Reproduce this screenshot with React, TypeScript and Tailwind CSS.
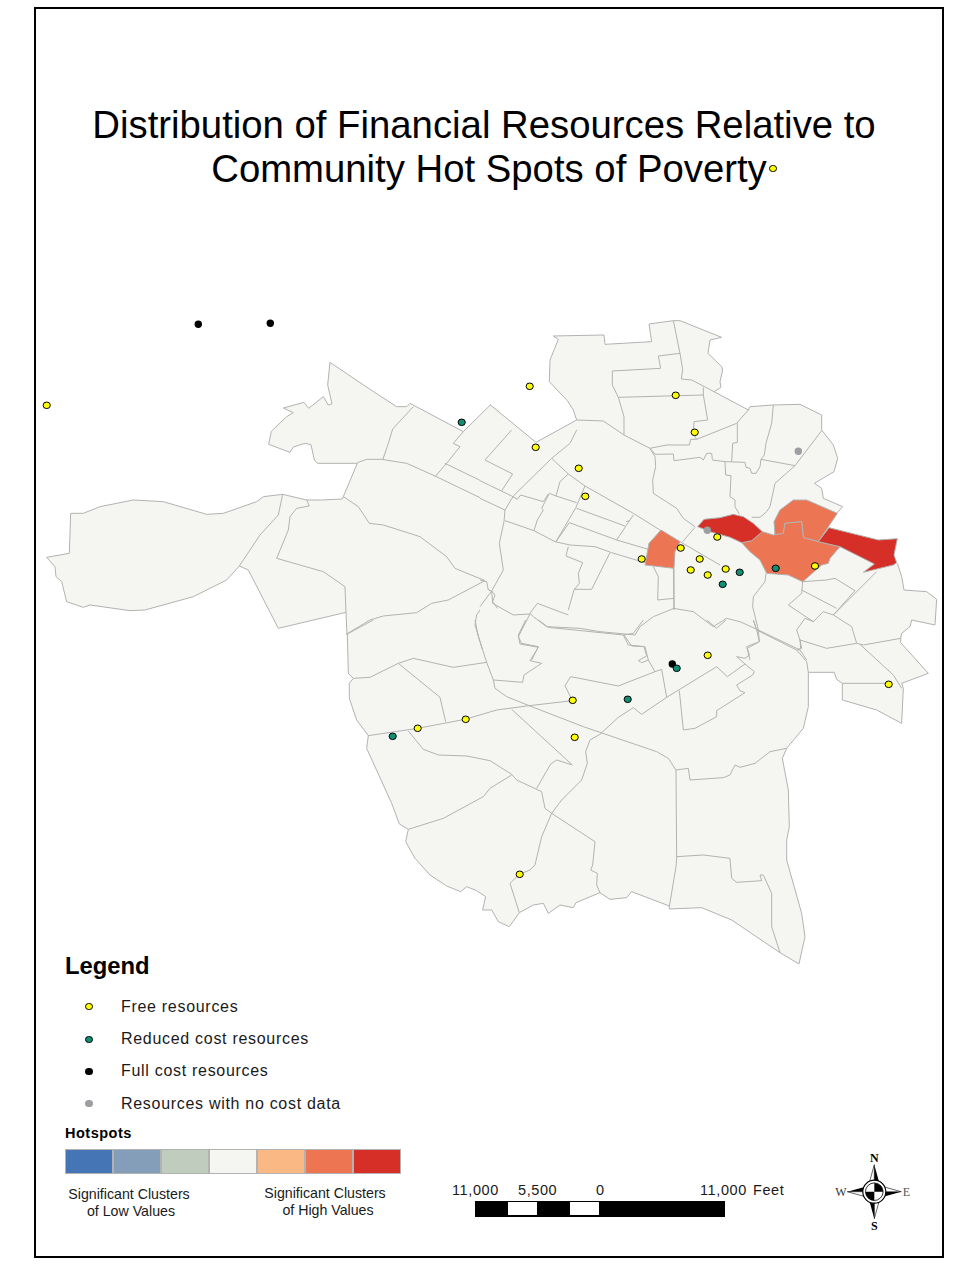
const FONT = { fontFamily: '"Liberation Sans", Arial, sans-serif' };

const FILL = '#f5f6f1';
const LINE = '#b2b2b2';
const ORANGE = '#ec7553';
const RED = '#d52f28';

const fillsA = [
  '1382,314 1300,395 1140,310 1130,320 1100,320 1020,268 900,187 893,255 906,312 895,315 880,290 836,325 822,307 760,324 790,338 770,350 724,394 716,433 780,457 790,441 825,430 843,434 853,480 862,490 982,490 937,597 875,600 830,600 758,583 700,590 680,605 580,640 530,643 400,605 310,600 210,620 160,640 122,640 118,760 50,772 75,800 78,830 95,845 110,905 160,922 180,915 300,932 345,930 490,890 590,840 628,798 655,810 745,985 948,937 951,1050 1410,1050 1410,330',
];
const linesA = [
  '1382,314 1300,395 1140,310 1130,320 1100,320 1020,268 900,187 893,255 906,312 895,315 880,290 836,325 822,307 760,324 790,338 770,350 724,394 716,433 780,457 790,441 825,430 843,434 853,480 862,490 982,490 937,597 875,600 830,600 758,583 700,590 680,605 580,640 530,643 400,605 310,600 210,620 160,640 122,640 118,760 50,772 75,800 78,830 95,845 110,905 160,922 180,915 300,932 345,930 490,890 590,840 628,798 655,810 745,985 948,937 951,1005',
  '758,583 745,645 690,705 628,798',
  '830,600 838,618 800,625 780,650 775,690 740,775 880,815 945,860 948,937',
  '1150,320 1088,387 1075,430 1058,480',
  '982,488 1010,478 1055,478 1130,490 1215,528 1350,593',
  '1300,395 1270,430 1290,440 1250,490 1215,530',
  '1245,490 1350,541',
  '940,590 985,620 1018,670 1060,675 1170,710 1250,770 1275,805 1365,842',
  '950,1002 1020,960 1060,948 1160,938 1205,910 1255,900 1365,842',
  '1350,930 1340,945 1335,975 1358,1050',
];

const fillsB = [
  '0,320 30,284 168,397 290,330 280,300 262,272 208,215 210,150 235,88 220,78 372,75 375,103 515,95 507,42 580,32 600,32 725,82 690,90 684,130 725,170 728,180 720,215 723,232 702,245 805,300 810,290 880,285 960,283 1025,315 1025,360 1060,405 1073,445 1062,485 1003,520 1025,535 1030,565 1088,590 1072,608 1040,650 1195,690 1252,686 1240,730 1252,760 1265,800 1272,840 1340,845 1370,868 1365,945 1295,930 1290,950 1265,970 1262,985 1262,1050 0,1050',
];
const linesB = [
  '30,284 168,397 290,330 280,300 262,272 208,215 210,150 235,88 220,78 372,75 375,103 515,95 507,42 580,32 600,32 725,82 690,90 684,130 725,170 728,180 720,215 723,232 702,245 805,300 810,290 880,285 960,283 1025,315 1025,360 1060,405 1073,445 1062,485 1003,520 1025,535 1030,565 1088,590 1072,608',
  '1252,760 1265,800 1272,840 1340,845 1370,868 1365,945 1295,930 1290,950 1265,970 1262,985',
  '580,32 600,130 608,178 604,207 635,210 702,245',
  '535,138 600,130',
  '535,138 542,175 397,183 397,225 415,262 432,320 432,375',
  '415,262 670,255 683,330 642,335 640,372 650,388 770,340 805,300',
  '670,232 670,255',
  '290,330 370,333 432,375 510,415 525,432',
  '510,415 560,405 628,405 632,388 650,388',
  '772,340 772,397 758,400 755,455',
  '880,285 875,340 858,400 853,435 843,448',
  '697,450 735,455 795,457 798,472 810,475 815,490 828,490 840,470 843,448 945,467 1025,362',
  '735,455 737,495 753,497 750,560 765,570 765,590 778,612',
  '945,467 885,520 870,590 860,605 840,622 815,622',
  '858,790 855,815 820,860 818,890 835,960 838,995 800,1010 810,1050',
  '968,815 965,850 925,885 1000,935 1030,905 1060,915 1190,785',
  '968,815 1040,810 1065,805 1125,842 1060,915',
  '965,840 1070,895',
  '1060,915 1115,950 1130,1000 1150,1005 1262,985',
  '1000,935 975,925 950,960 960,990 1040,1015 1130,1000',
  '835,960 960,1020 980,1050',
  '960,990 965,1015 955,1020',
  '580,760 582,895 520,920 480,950 465,975 360,965 300,955 200,950 160,920 150,910 172,880 265,915',
  '580,895 640,905 700,950 740,925 780,935 835,960',
  '150,912 115,980 125,1000 175,1010 155,1050',
  '35,843 38,880 100,915 150,912',
  '430,975 445,1005 495,1010 505,1050',
];

const linesCenter = [
  '95,0 15,90 98,132 65,182',
  '0,152 95,198 112,208 122,195 190,215',
  '0,205 75,240',
  '290,0 270,40 215,85 100,198 75,240 72,275 58,340 70,420 35,483 0,530',
  '215,85 265,132 315,168 460,250 540,300 600,335 720,405',
  '265,132 240,155 228,198 290,218',
  '315,168 288,232 228,335',
  '228,198 208,190 185,235 190,240 172,270 162,302',
  '190,215 205,192',
  '290,235 435,288',
  '268,278 410,330 505,358',
  '268,278 228,335',
  '460,255 438,288 410,330',
  '438,275 448,272',
  '75,272 162,302 225,335 270,345 345,350 395,368 495,398',
  '265,350 258,378 308,398 295,430 298,460 282,480 265,540',
  '282,478 335,478 390,368',
  '645,292 608,335',
  '520,410 535,440 533,510 582,505',
  '582,415 582,540',
  '0,450 20,455 25,480 35,483 45,495 38,515 52,535',
  '510,55 525,80 527,110 518,150 520,190 590,235 610,265 645,290',
  '525,73 580,72 582,92 660,82 670,90 680,70 695,70 697,88',
];

const fillsC = [
  '1265,40 1262,68 1345,160 1265,190 1270,205 1265,310 1190,270 1087,240 1087,190 1070,178 1063,157 985,157 985,260 970,325 920,385 907,415 925,510 928,620 920,660 920,720 965,880 975,950 957,1032 900,998 755,900 665,863 568,867 568,858 455,815 440,833 390,838 360,818 288,848 280,863 240,855 205,880 190,850 160,855 118,878 90,0',
];
const linesC = [
  '1262,68 1345,160 1265,190 1270,205 1265,310 1190,270 1087,240 1087,190 1070,178 1063,157 985,157 985,260 970,325 920,385 907,415 925,510 928,620 920,660 920,720 965,880 975,950 957,1032 900,998 755,900 665,863 568,867 568,858 455,815 440,833 390,838 360,818 288,848 280,863 240,855 205,880 190,850 160,855 118,878',
  '1087,190 1225,190',
  '1140,73 1240,165 1265,205',
  '1262,52 1262,68',
  '985,157 980,125 950,90 830,30 820,0',
  '960,58 962,85 950,90',
];

const fillsD = [
  '538,0 538,878 508,920 475,905 455,870 428,870 437,830 410,812 380,800 362,815 320,798 270,765 225,715 197,665 205,628 178,612 155,550 80,385 85,347 50,300 28,235 28,190 40,175 25,160 22,42 20,0',
];
const linesD = [
  '538,878 508,920 475,905 455,870 428,870 437,830 410,812 380,800 362,815 320,798 270,765 225,715 197,665 205,628 178,612 155,550 80,385 85,347 50,300 28,235 28,190 40,175 25,160 22,42',
  '22,42 100,0',
  '25,160 40,175 90,172 175,130 220,115 340,142 440,127',
  '405,0 415,50 440,127 460,180 465,205 500,230 570,258 730,320 950,395 985,415 1008,450',
  '460,180 548,187 552,165 605,130 570,122 595,82 540,72 535,45 557,0',
  '175,130 300,232 317,305',
  '85,347 233,325 375,298 470,270 560,258 697,242',
  '697,242 675,197 692,170 835,198 945,155 965,148 980,232',
  '852,45 875,78 912,80 920,108 895,122 905,128 925,120 945,155',
  '595,0 625,22 850,45 880,40 910,0',
  '1008,450 1010,715 1008,740 988,860',
  '1008,450 1045,445 1050,480 1150,473 1170,465 1185,435 1200,442 1245,430 1290,395 1340,385',
  '1010,710 1090,705 1170,715 1175,775 1190,787 1265,782 1260,765 1270,765 1295,820 1295,920 1320,998',
  '515,268 697,435',
  '697,435 650,420 632,432 590,505',
  '205,333 250,388 295,405 380,408 450,422 515,463 530,480 605,515 615,565 635,580 765,665 758,735 752,750 772,760 770,795 780,818',
  '515,465 450,505 430,530 310,595 205,628',
  '635,580 605,650 585,735 570,750 538,763 510,790 538,878',
  '980,232 1130,140 1162,170 1215,132 1190,110 1215,115 1228,105 1222,85 1258,65 1250,30 1240,0',
  '1215,132 1243,155 1238,165 1190,195 1200,212 1215,218 1130,272 1130,290 1065,325 1030,330 1018,212',
  '980,232 905,283 880,263 835,292 810,315 780,343 750,360 737,395 742,430 725,480 665,540 635,580',
  '1100,0 1130,25 1158,0',
];

const hotZoom6 = [
  { c: ORANGE, p: '435,135 432,95 450,60 490,30 530,30 622,70 565,155 520,143 515,95 465,100 460,130' },
  { c: ORANGE, p: '335,158 365,152 397,125 430,135 460,130 465,100 515,95 520,143 565,155 630,170 600,205 595,220 575,225 518,275 475,255 410,250 390,210 360,185' },
  { c: RED, p: '203,110 240,125 300,142 335,158 365,152 397,125 370,100 340,80 310,73 270,83 222,88' },
  { c: RED, p: '565,155 597,113 745,150 802,146 792,195 800,218 790,225 700,247 733,222 630,170' },
];

const dots: [number, number, string][] = [
  [46.7, 405.3, 'y'], [529.7, 386.3, 'y'], [675.7, 395.3, 'y'], [694.7, 432.3, 'y'], [535.7, 447.3, 'y'],
  [578.7, 468.3, 'y'], [585.3, 496.3, 'y'], [641.7, 559, 'y'], [680.7, 548, 'y'], [699.7, 559, 'y'],
  [717.3, 537, 'y'], [690.7, 570, 'y'], [707.7, 575, 'y'], [725.7, 569, 'y'], [815, 566, 'y'],
  [707.7, 655.3, 'y'], [572.7, 700.3, 'y'], [465.7, 719.3, 'y'], [417.7, 728.3, 'y'], [574.7, 737.3, 'y'],
  [519.7, 874.3, 'y'], [888.7, 684.3, 'y'],
  [461.7, 422.3, 't'], [739.7, 572.3, 't'], [722.7, 584.3, 't'], [775.7, 568.3, 't'], [392.7, 736.3, 't'],
  [627.7, 699.3, 't'],
  [198.3, 324.3, 'k'], [270.3, 323.3, 'k'], [672.3, 664, 'k'], [676.7, 668.3, 't'],
  [798.3, 451.3, 'g'], [707.3, 530.3, 'g'],
];

function Poly({ pts }: { pts: string[] }) {
  return (
    <>
      {pts.map((p, i) => (
        <polyline key={i} points={p} />
      ))}
    </>
  );
}

function Dot({ x, y, k }: { x: number; y: number; k: string }) {
  if (k === 'k') return <circle cx={x} cy={y} r={3.7} fill="#000" />;
  if (k === 'g') return <circle cx={x} cy={y} r={3.7} fill="#9c9ea2" />;
  return (
    <ellipse cx={x} cy={y} rx={3.6} ry={3.3} fill={k === 'y' ? '#ffff00' : '#0f9073'} stroke="#000" strokeWidth={1} />
  );
}

function MapArea() {
  return (
    <svg viewBox="36 191 906 759" className="block w-[906px] h-[759px] shrink-0 overflow-visible">
      <g fill={FILL} stroke="none">
        <g transform="translate(30 300) scale(0.33333)"><Poly pts={fillsA} /></g>
        <g transform="translate(480 310) scale(0.33333)"><Poly pts={fillsB} /></g>
        <g transform="translate(480 620) scale(0.33333)"><Poly pts={fillsC} /></g>
        <g transform="translate(340 620) scale(0.33333)"><Poly pts={fillsD} /></g>
      </g>
      <g fill="none" stroke={LINE} strokeWidth={3} strokeLinejoin="round">
        <g transform="translate(30 300) scale(0.33333)"><Poly pts={linesA} /></g>
        <g transform="translate(480 310) scale(0.33333)"><Poly pts={linesB} /></g>
        <g transform="translate(480 430) scale(0.33333)"><Poly pts={linesCenter} /></g>
        <g transform="translate(480 620) scale(0.33333)"><Poly pts={linesC} /></g>
        <g transform="translate(340 620) scale(0.33333)"><Poly pts={linesD} /></g>
      </g>
      <g stroke={LINE} strokeWidth={3} strokeLinejoin="round">
        <g transform="translate(480 430) scale(0.33333)">
          <polygon points="543,300 600,335 585,365 582,415 495,405 507,340" fill={ORANGE} />
        </g>
        <g transform="translate(630 490) scale(0.33333)">
          {hotZoom6.map((h, i) => (
            <polygon key={i} points={h.p} fill={h.c} />
          ))}
        </g>
      </g>
      {dots.map((d, i) => (
        <Dot key={i} x={d[0]} y={d[1]} k={d[2]} />
      ))}
    </svg>
  );
}

function Compass() {
  return (
    <svg viewBox="830 1148 90 84" className="block w-[90px] h-[84px]">
      <g transform="translate(874.3 1191.7)">
        <polygon points="0,-27 -5,-9 0,-9" fill="#fff" stroke="#000" strokeWidth={0.6} />
        <polygon points="0,-27 5,-9 0,-9" fill="#000" />
        <polygon points="0,27 5,9 0,9" fill="#fff" stroke="#000" strokeWidth={0.6} />
        <polygon points="0,27 -5,9 0,9" fill="#000" />
        <polygon points="-27,0 -9,-5 -9,0" fill="#000" />
        <polygon points="-27,0 -9,5 -9,0" fill="#fff" stroke="#000" strokeWidth={0.6} />
        <polygon points="27,0 9,5 9,0" fill="#000" />
        <polygon points="27,0 9,-5 9,0" fill="#fff" stroke="#000" strokeWidth={0.6} />
        <circle r={11.5} fill="#fff" stroke="#000" strokeWidth={1.2} />
        <circle r={8.8} fill="#fff" stroke="#000" strokeWidth={0.8} />
        <path d="M0 0 L0 -8.8 A8.8 8.8 0 0 1 8.8 0 Z" fill="#000" />
        <path d="M0 0 L0 8.8 A8.8 8.8 0 0 1 -8.8 0 Z" fill="#000" />
      </g>
      <g fontFamily='"Liberation Serif", serif' textAnchor="middle" fontSize={12}>
        <text x={874.3} y={1162} fontWeight="bold">N</text>
        <text x={874.3} y={1230} fontWeight="bold">S</text>
        <text x={841} y={1196} fill="#333">W</text>
        <text x={906.5} y={1196} fill="#555">E</text>
      </g>
    </svg>
  );
}

const legendItems = [
  { label: 'Free resources', dot: 'bg-[#ffff00] border border-black' },
  { label: 'Reduced cost resources', dot: 'bg-[#0f9073] border border-black' },
  { label: 'Full cost resources', dot: 'bg-black' },
  { label: 'Resources with no cost data', dot: 'bg-[#9c9ea2]' },
];

const swatches = ['bg-[#4575b5]', 'bg-[#849eba]', 'bg-[#c0ccbe]', 'bg-[#f5f6f1]', 'bg-[#fab984]', 'bg-[#ed7551]', 'bg-[#d62f27]'];

export default function App() {
  return (
    <div style={FONT} className="bg-white text-black w-[978px] h-[1265px] pt-[7px] pl-[34px]">
      <div className="relative w-[910px] h-[1251px] border-2 border-black flex flex-col">
        <h1 className="pt-[94px] text-center text-[38.3px] leading-[44px] font-normal">
          <span className="block pr-[10px]">Distribution of Financial Resources Relative to</span>
          <span className="block">Community Hot Spots of Poverty</span>
        </h1>
        <span className="absolute left-[733px] top-[156px] w-[8px] h-[7px] rounded-full bg-[#ffff00] border border-black" />
        <MapArea />
        <div className="flex flex-1">
          <div className="w-[404px] shrink-0 pl-[29px] pt-[2px] flex flex-col">
            <div className="text-[23.8px] leading-[28px] font-bold">Legend</div>
            <div className="mt-[10.5px] flex flex-col">
              {legendItems.map((it) => (
                <div key={it.label} className="h-[32.4px] flex items-center text-[16px] tracking-[0.7px] text-[#1a1a1a]">
                  <span className={`ml-[20px] w-[8px] h-[7px] rounded-full ${it.dot}`} />
                  <span className="ml-[28px]">{it.label}</span>
                </div>
              ))}
            </div>
            <div className="mt-[2.5px] text-[14.5px] leading-[20px] font-bold tracking-[0.5px]">Hotspots</div>
            <div className="mt-[6px] flex w-[336px] h-[25px]">
              {swatches.map((c) => (
                <div key={c} className={`flex-1 border border-[#b2b2b2] ${c}`} />
              ))}
            </div>
            <div className="flex text-[14.2px] leading-[17px] text-[#1a1a1a]">
              <div className="w-[128px] mt-[12px] text-center">
                <div className="whitespace-nowrap">Significant Clusters</div>
                <div className="pl-[4px]">of Low Values</div>
              </div>
              <div className="ml-[68px] w-[128px] mt-[11px] text-center">
                <div className="whitespace-nowrap">Significant Clusters</div>
                <div className="pl-[6px]">of High Values</div>
              </div>
            </div>
          </div>
          <div className="flex-1 flex items-start pl-[12px]">
            <div className="w-[333px] shrink-0 pt-[231px]">
              <div className="flex h-[20px] items-center text-[14.5px] tracking-[0.6px] text-[#1a1a1a] whitespace-nowrap">
                <span className="w-[66px]">11,000</span>
                <span className="w-[78px]">5,500</span>
                <span className="w-[104px]">0</span>
                <span className="w-[53px]">11,000</span>
                <span>Feet</span>
              </div>
              <div className="ml-[23px] w-[250px] h-[16px] bg-black flex items-start pt-[1px]">
                <span className="ml-[33px] w-[29px] h-[13px] bg-white" />
                <span className="ml-[33px] w-[29px] h-[13px] bg-white" />
              </div>
            </div>
            <div className="mt-[198px] ml-[45px]">
              <Compass />
            </div>
          </div>
        </div>
      </div>
    </div>
  );
}
